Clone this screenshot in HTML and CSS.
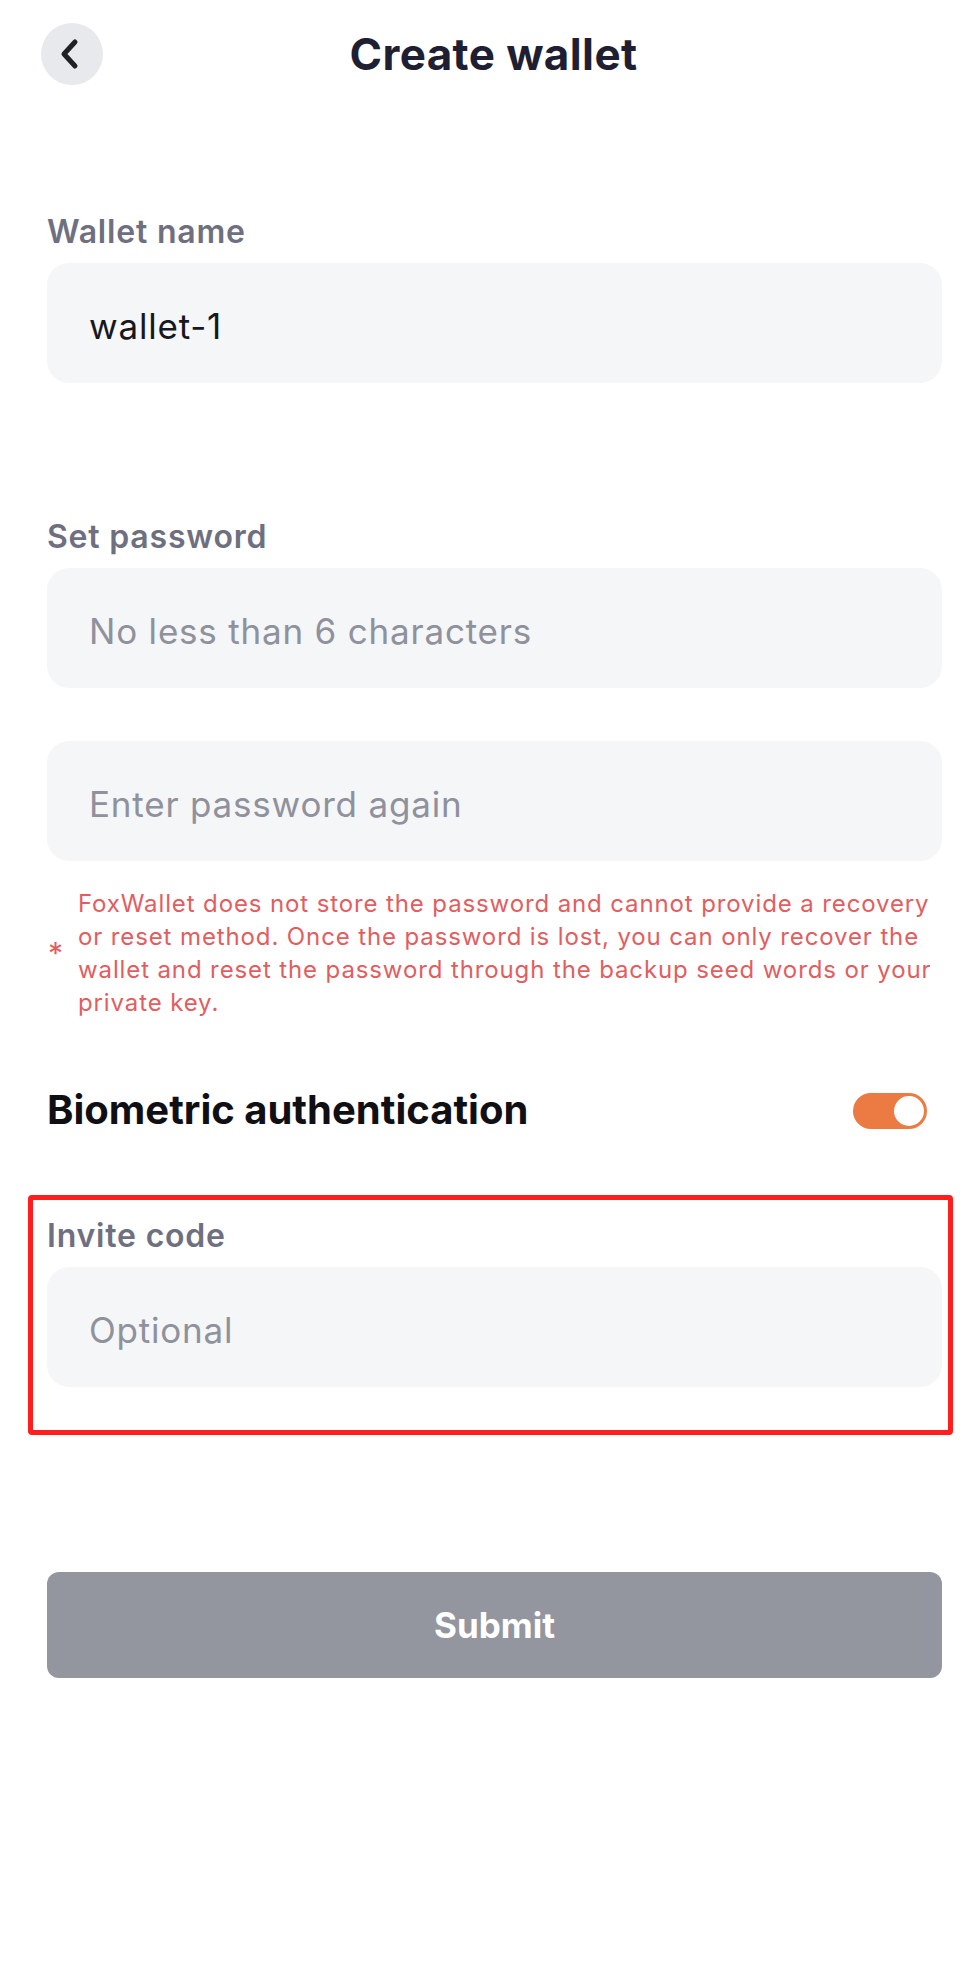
FILE: index.html
```html
<!DOCTYPE html>
<html lang="en">
<head>
<meta charset="utf-8">
<title>Create wallet</title>
<link rel="stylesheet" href="styles.css">
</head>
<body>
<div class="page">
  <header class="header">
    <button class="back" aria-label="Back">
      <svg width="24" height="32" viewBox="0 0 24 32"><path d="M17 4 L6 16 L17 28" fill="none" stroke="#202124" stroke-width="5" stroke-linecap="round" stroke-linejoin="round"/></svg>
    </button>
    <h1 class="title">Create wallet</h1>
    <span class="spacer"></span>
  </header>

  <main class="form">
    <section class="field field-name">
      <label class="label">Wallet name</label>
      <input class="input" type="text" value="wallet-1">
    </section>

    <section class="field field-pass">
      <label class="label">Set password</label>
      <input class="input" type="password" placeholder="No less than 6 characters">
      <input class="input input-again" type="password" placeholder="Enter password again">
    </section>

    <div class="warning">
      <span class="star">*</span>
      <p class="warning-text">FoxWallet does not store the password and cannot provide a recovery<br>or reset method. Once the password is lost, you can only recover the<br>wallet and reset the password through the backup seed words or your<br>private key.</p>
    </div>

    <div class="bio-row">
      <span class="bio-label">Biometric authentication</span>
      <span class="toggle"><span class="knob"></span></span>
    </div>

    <section class="field highlight">
      <label class="label">Invite code</label>
      <input class="input" type="text" placeholder="Optional">
    </section>

    <button class="submit">Submit</button>
  </main>
</div>
</body>
</html>
```
FILE: styles.css
```css
* { box-sizing: border-box; }
html, body { margin: 0; padding: 0; background: #ffffff; }
body { font-family: Inter, "Noto Sans", "Liberation Sans", sans-serif; color: #1e1e30; }

.page { width: 980px; min-height: 1988px; }

.header {
  display: grid;
  grid-template-columns: 62px 1fr 62px;
  align-items: center;
  padding: 23px 38px 0 41px;
}
.back {
  width: 62px; height: 62px;
  border-radius: 50%;
  border: none;
  background: #e8e9ec;
  display: flex; align-items: center; justify-content: center;
  padding: 0 4px 0 0;
}
.title {
  margin: 0;
  text-align: center;
  font-size: 44px;
  line-height: 62px;
  font-weight: 700;
  color: #1f1f33;
  letter-spacing: 0.4px;
  padding-left: 4px;
}

.form { padding: 0 38px 0 47px; display: flex; flex-direction: column; }

.field { display: flex; flex-direction: column; }
.field-name { margin-top: 129px; }
.field-pass { margin-top: 136px; }

.label {
  font-size: 32px;
  line-height: 36px;
  font-weight: 600;
  color: #6e7080;
  letter-spacing: 0.8px;
  margin-bottom: 13px;
}

.input {
  width: 100%;
  height: 120px;
  border: none;
  outline: none;
  border-radius: 22px;
  background: #f5f6f8;
  padding: 6px 0 0 42px;
  font-family: Inter, "Noto Sans", "Liberation Sans", sans-serif;
  font-size: 35px;
  letter-spacing: 0.8px;
  color: #17171c;
}
.input::placeholder { color: #8f919c; opacity: 1; }
.input-again { margin-top: 53px; }

.warning {
  display: flex;
  align-items: center;
  margin-top: 26px;
}
.star {
  width: 31px;
  flex: none;
  color: #e35d5f;
  font-size: 30px;
  line-height: 30px;
  padding-left: 1px;
}
.warning-text {
  margin: 0;
  font-size: 24px;
  line-height: 33px;
  color: #e35d5f;
  letter-spacing: 0.88px;
  white-space: nowrap;
}

.bio-row {
  display: flex;
  align-items: center;
  justify-content: space-between;
  margin-top: 65px;
  height: 50px;
}
.bio-label {
  font-size: 40px;
  font-weight: 700;
  color: #101014;
}
.toggle {
  position: relative;
  width: 74px; height: 36px;
  border-radius: 18px;
  background: #ec7a43;
  margin-right: 15px;
  margin-top: 4px;
}
.knob {
  position: absolute;
  right: 3px; top: 3px;
  width: 30px; height: 30px;
  border-radius: 50%;
  background: #ffffff;
}

.highlight {
  margin: 61px -11px 0 -19px;
  border: 5px solid #ff1e1e;
  border-radius: 4px;
  padding: 18px 6px 43px 14px;
}

.submit {
  margin-top: 137px;
  height: 106px;
  width: 100%;
  border: none;
  border-radius: 12px;
  background: #93959f;
  color: #ffffff;
  font-family: Inter, "Noto Sans", "Liberation Sans", sans-serif;
  font-size: 35px;
  font-weight: 700;
}
```
